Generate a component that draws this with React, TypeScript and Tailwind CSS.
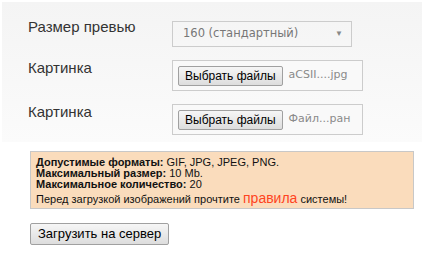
import React from "react"

function FileField({ name }: { name: string }) {
  return (
    <div className="flex items-center w-[191px] h-[31px] border border-[#cccccc] bg-[#f9f9f9] pl-[5px] overflow-hidden">
      <button className="shrink-0 whitespace-nowrap h-[20px] px-[6px] border border-[#a0a0a0] rounded-[2px] bg-gradient-to-b from-[#f6f6f6] to-[#dddddd] text-[12px] leading-none text-black font-['Liberation_Sans',Arial,sans-serif]">
        Выбрать файлы
      </button>
      <span className="ml-[6px] whitespace-nowrap text-[11px] text-[#8a8a8a] font-['DejaVu_Sans',Verdana,sans-serif]">{name}</span>
    </div>
  )
}

export default function App() {
  return (
    <div className="w-[424px] h-[254px] bg-white font-['Liberation_Sans',Arial,sans-serif]">
      {/* form panel */}
      <div className="mx-[2px] pt-[2px]">
        <div className="bg-gradient-to-b from-[#f4f4f4] to-[#fbfbfb] h-[140px] pt-[17px] pl-[26px]">
          <div className="flex">
            <div className="w-[144px] text-[15px] leading-[16px] text-[#333333]">Размер превью</div>
            <div className="flex items-center justify-between w-[180px] h-[26px] border border-[#cccccc] pl-[10px] pr-[8px] mt-[2px]">
              <span className="text-[11.5px] text-[#777777] font-['DejaVu_Sans',Verdana,sans-serif]">160 (стандартный)</span>
              <span className="text-[8px] text-[#888888]">▼</span>
            </div>
          </div>
          <div className="flex mt-[13px]">
            <div className="w-[144px] text-[15px] leading-[16px] text-[#333333]">Картинка</div>
            <FileField name="aCSII....jpg" />
          </div>
          <div className="flex mt-[13px]">
            <div className="w-[144px] text-[15px] leading-[16px] text-[#333333]">Картинка</div>
            <FileField name="Файл...ран" />
          </div>
        </div>
      </div>

      {/* info box */}
      <div className="ml-[30px] mt-[9px] w-[384px] h-[58px] border border-[#c8c8c8] bg-[#fadcbc] px-[5px] pt-[5px] text-[11px] leading-[11px] text-[#111111]">
        <div><b>Допустимые форматы:</b> GIF, JPG, JPEG, PNG.</div>
        <div><b>Максимальный размер:</b> 10 Mb.</div>
        <div><b>Максимальное количество:</b> 20</div>
        <div className="leading-[15px] mt-[1px]">
          Перед загрузкой изображений прочтите{" "}
          <span className="text-[14px] text-[#ff4422]">правила</span> системы!
        </div>
      </div>

      {/* submit */}
      <div className="ml-[30px] mt-[12px]">
        <button className="h-[22px] px-[7px] border border-[#a0a0a0] rounded-[2px] bg-gradient-to-b from-[#f6f6f6] to-[#dddddd] text-[13px] leading-none text-black">
          Загрузить на сервер
        </button>
      </div>
    </div>
  )
}
